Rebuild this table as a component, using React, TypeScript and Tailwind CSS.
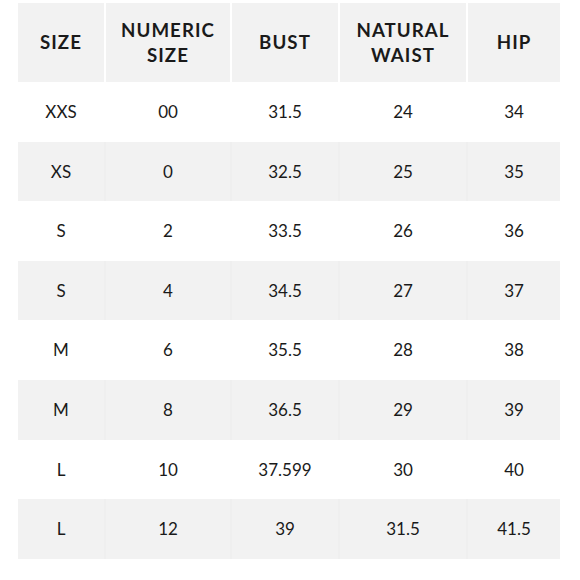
import React from "react";

const rows = [
  ["XXS", "00", "31.5", "24", "34"],
  ["XS", "0", "32.5", "25", "35"],
  ["S", "2", "33.5", "26", "36"],
  ["S", "4", "34.5", "27", "37"],
  ["M", "6", "35.5", "28", "38"],
  ["M", "8", "36.5", "29", "39"],
  ["L", "10", "37.599", "30", "40"],
  ["L", "12", "39", "31.5", "41.5"],
];

const headers: React.ReactNode[] = [
  "SIZE",
  <>NUMERIC<br />SIZE</>,
  "BUST",
  <>NATURAL<br />WAIST</>,
  "HIP",
];

export default function App() {
  return (
    <div className="w-[580px] h-[580px] bg-white pt-[3px] pl-[18px]" style={{ fontFamily: "Lato, 'Open Sans', sans-serif" }}>
      <div className="w-[542px]">
        <div className="grid grid-cols-[86px_124px_106px_126px_92px] gap-x-[2px] h-[79px]">
          {headers.map((h, i) => (
            <div key={i} className="bg-[#f2f2f2] flex items-center justify-center text-center font-bold text-[18.7px] leading-[25px] tracking-[0.055em] text-[#1a1a1a]">
              <span>{h}</span>
            </div>
          ))}
        </div>
        {rows.map((r, ri) => (
          <div
            key={ri}
            className={`grid grid-cols-[86px_124px_106px_126px_92px] gap-x-[2px] h-[59.6px] ${ri % 2 === 1 ? "bg-[#efefef]" : "bg-white"}`}
          >
            {r.map((c, ci) => (
              <div
                key={ci}
                className={`flex items-center justify-center text-[17px] text-[#1a1a1a] ${ri % 2 === 1 ? "bg-[#f2f2f2]" : "bg-white"}`}
              >
                {c}
              </div>
            ))}
          </div>
        ))}
      </div>
    </div>
  );
}
